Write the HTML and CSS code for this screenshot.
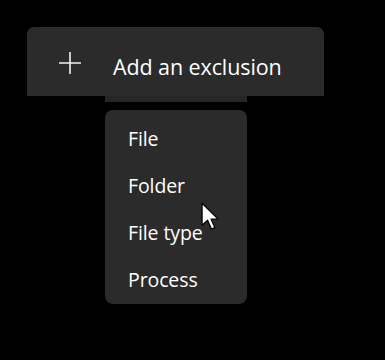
FILE: index.html
```html
<!DOCTYPE html>
<html>
<head>
<meta charset="utf-8">
<link rel="stylesheet" href="styles.css">
</head>
<body>
<div class="stage">
  <div class="add-btn">
    <svg class="plus" width="22" height="22" viewBox="0 0 22 22"><path d="M11 0V22M0 11H22" stroke="#f2f2f2" stroke-width="1.6" fill="none"/></svg>
    <span class="add-label">Add an exclusion</span>
  </div>
  <div class="strip"></div>
  <div class="menu">
    <div class="item">File</div>
    <div class="item">Folder</div>
    <div class="item">File type</div>
    <div class="item">Process</div>
    <svg class="cursor" width="22" height="31" viewBox="0 0 20 28"><path d="M1 1V21L6 16.5L9.5 24.5L12.5 23.2L9.2 15.5H15.5Z" fill="#fff" stroke="#000" stroke-width="1.1" stroke-linejoin="round"/></svg>
  </div>
</div>
</body>
</html>
```
FILE: styles.css
```css
html, body {
  margin: 0;
  padding: 0;
  background: #000;
  width: 385px;
  height: 360px;
  overflow: hidden;
}
.stage {
  padding: 27px 0 0 27px;
  font-family: "Open Sans", "Noto Sans", sans-serif;
  color: #fff;
}
.add-btn {
  width: 297px;
  height: 69px;
  background: #2b2b2b;
  border-radius: 7px 7px 0 0;
  display: flex;
  align-items: center;
  box-sizing: border-box;
  padding: 6px 0 0 32px;
}
.plus {
  flex: none;
  margin-top: -4px;
}
.add-label {
  margin-left: 32px;
  margin-top: 4px;
  font-size: 21.5px;
  letter-spacing: -0.1px;
}
.strip {
  margin-left: 78px;
  width: 142px;
  height: 6px;
  background: #262626;
}
.menu {
  position: relative;
  margin: 8px 0 0 78px;
  width: 142px;
  background: #2b2b2b;
  border-radius: 8px;
  padding: 5px 0 1px;
}
.item {
  height: 47px;
  display: flex;
  align-items: center;
  padding-left: 23px;
  font-size: 19.5px;
  letter-spacing: -0.1px;
}
.cursor {
  position: absolute;
  left: 96px;
  top: 92px;
}
```
